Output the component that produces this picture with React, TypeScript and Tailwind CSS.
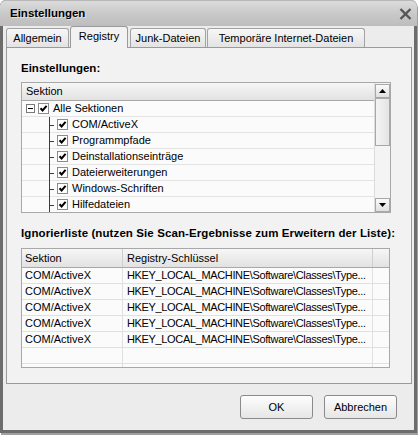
import React from 'react';

const sections = [
  'COM/ActiveX',
  'Programmpfade',
  'Deinstallationseinträge',
  'Dateierweiterungen',
  'Windows-Schriften',
  'Hilfedateien',
];

const ignored = Array.from({ length: 5 }, () => ({
  section: 'COM/ActiveX',
  key: 'HKEY_LOCAL_MACHINE\\Software\\Classes\\Type...',
}));

const Check: React.FC = () => (
  <span className="w-[11px] h-[11px] border border-[#8c8c8c] bg-white flex items-center justify-center shrink-0">
    <svg width="9" height="9" viewBox="0 0 9 9">
      <path d="M1.5 4.2 L3.6 6.4 L7.6 1.8" fill="none" stroke="#000" strokeWidth="2" />
    </svg>
  </span>
);

const Tab: React.FC<{ label: string; width: string; active?: boolean; className?: string }> = ({
  label,
  width,
  active,
  className = '',
}) => (
  <div
    className={
      active
        ? `${width} ${className} h-[22px] -mb-px relative z-10 bg-[#f2f2f2] border border-b-0 border-[#9a9a9a] rounded-t-[3px] flex items-center justify-center pb-[2px]`
        : `${width} ${className} h-[19px] bg-gradient-to-b from-[#f7f7f7] to-[#e3e3e3] border border-b-0 border-[#a3a3a3] rounded-t-[3px] flex items-center justify-center`
    }
  >
    {label}
  </div>
);

const ScrollArrow: React.FC<{ up?: boolean }> = ({ up }) => (
  <div className="h-[14px] bg-gradient-to-b from-[#fafafa] to-[#e0e0e0] border border-[#a8a8a8] flex items-center justify-center">
    <svg width="7" height="4" viewBox="0 0 7 4">
      <path d={up ? 'M0 4 L3.5 0 L7 4 Z' : 'M0 0 L3.5 4 L7 0 Z'} fill="#000" />
    </svg>
  </div>
);

export default function App() {
  return (
    <div className="w-[419px] h-[435px] bg-white font-['Liberation_Sans',Arial,sans-serif] text-[11px] text-black">
      <div className="w-[417px] h-[433px] flex flex-col bg-[#ececec] border-x-[3px] border-b-[3px] border-[#6c6c6c] rounded-t-[6px] shadow-[1px_2px_0_#a0a0a0]">
        {/* title bar */}
        <div className="h-[26px] shrink-0 -mx-[3px] rounded-t-[6px] bg-gradient-to-b from-[#dcdcdc] via-[#c9c9c9] to-[#bdbdbd] border-t border-[#b8b8b8] flex items-center justify-between pl-[10px] pr-[5px]">
          <span className="font-bold text-[11.5px] [text-shadow:1px_1px_0_#e4e4e4]">Einstellungen</span>
          <svg width="13" height="12" viewBox="0 0 13 12">
            <path d="M1.5 1 L11.5 11 M11.5 1 L1.5 11" stroke="#555" strokeWidth="2.4" />
          </svg>
        </div>

        {/* tabs */}
        <div className="h-[21px] shrink-0 flex items-end pl-[3px]">
          <Tab label="Allgemein" width="w-[63px]" />
          <Tab label="Registry" width="w-[58px]" active className="ml-px" />
          <Tab label="Junk-Dateien" width="w-[76px]" className="ml-[2px]" />
          <Tab label="Temporäre Internet-Dateien" width="w-[158px]" className="ml-px" />
        </div>

        {/* panel */}
        <div className="ml-[3px] mr-[2px] h-[337px] shrink-0 bg-[#f2f2f2] border border-[#9a9a9a] flex flex-col pl-[14px] pt-[13px]">
          <div className="h-[14px] font-bold text-[11.5px] leading-[14px]">Einstellungen:</div>

          <div className="mt-[7px] w-[370px] h-[131px] border border-[#a8a8a8] bg-[#fbfbfb] flex overflow-hidden">
            <div className="flex-1 flex flex-col">
              <div className="h-[18px] shrink-0 bg-gradient-to-b from-[#f6f6f6] to-[#e2e2e2] border-b border-[#a8a8a8] flex items-center pl-[4px]">
                Sektion
              </div>
              <div className="h-[16px] shrink-0 border-b border-[#e4e4e4] flex items-center pl-[4px]">
                <span className="w-[9px] h-[9px] border border-[#7a7a7a] bg-white flex items-center justify-center shrink-0">
                  <span className="w-[5px] h-px bg-black" />
                </span>
                <span className="ml-[3px]">
                  <Check />
                </span>
                <span className="ml-[4px]">Alle Sektionen</span>
              </div>
              {sections.map((s) => (
                <div key={s} className="h-[16px] shrink-0 border-b border-[#e4e4e4] flex items-center pl-[27px]">
                  <span className="relative w-[8px] h-[16px] shrink-0">
                    <span className="absolute left-0 top-0 w-px h-[16px] bg-[#3c3c3c]" />
                    <span className="absolute left-0 top-[8px] w-[5px] h-px bg-[#3c3c3c]" />
                  </span>
                  <Check />
                  <span className="ml-[4px]">{s}</span>
                </div>
              ))}
            </div>
            <div className="w-[16px] shrink-0 flex flex-col bg-[#f4f4f4] border-l border-[#dcdcdc] pt-[1px]">
              <ScrollArrow up />
              <div className="h-[48px] bg-gradient-to-r from-[#f4f4f4] to-[#e4e4e4] border border-[#a8a8a8]" />
              <div className="flex-1" />
              <ScrollArrow />
            </div>
          </div>

          <div className="mt-[13px] h-[14px] font-bold text-[11.5px] leading-[14px] tracking-[0.1px] whitespace-nowrap">
            Ignorierliste (nutzen Sie Scan-Ergebnisse zum Erweitern der Liste):
          </div>

          <div className="mt-[8px] w-[369px] h-[120px] border border-[#a8a8a8] bg-[#fbfbfb] overflow-hidden">
            <div className="h-[19px] flex bg-gradient-to-b from-[#f6f6f6] to-[#e2e2e2] border-b border-[#a8a8a8]">
              <div className="w-[101px] border-r border-[#cfcfcf] flex items-center pl-[3px]">Sektion</div>
              <div className="w-[250px] border-r border-[#cfcfcf] flex items-center pl-[4px]">Registry-Schlüssel</div>
              <div className="flex-1" />
            </div>
            {[...ignored, null, null].map((r, i) => (
              <div key={i} className="h-[16px] flex border-b border-[#e0e0e0]">
                <div className="w-[101px] border-r border-[#e0e0e0] flex items-center pl-[3px]">{r?.section}</div>
                <div className="w-[250px] border-r border-[#e0e0e0] flex items-center pl-[4px] whitespace-nowrap tracking-[-0.35px]">
                  {r?.key}
                </div>
                <div className="flex-1" />
              </div>
            ))}
          </div>
        </div>

        {/* buttons */}
        <div className="flex justify-end gap-[11px] pr-[17px] pt-[11px]">
          <button className="w-[73px] h-[24px] rounded-[3px] border border-[#8a8a8a] bg-gradient-to-b from-[#fdfdfd] to-[#e6e6e6]">
            OK
          </button>
          <button className="w-[73px] h-[24px] rounded-[3px] border border-[#8a8a8a] bg-gradient-to-b from-[#fdfdfd] to-[#e6e6e6]">
            Abbrechen
          </button>
        </div>
      </div>
    </div>
  );
}
